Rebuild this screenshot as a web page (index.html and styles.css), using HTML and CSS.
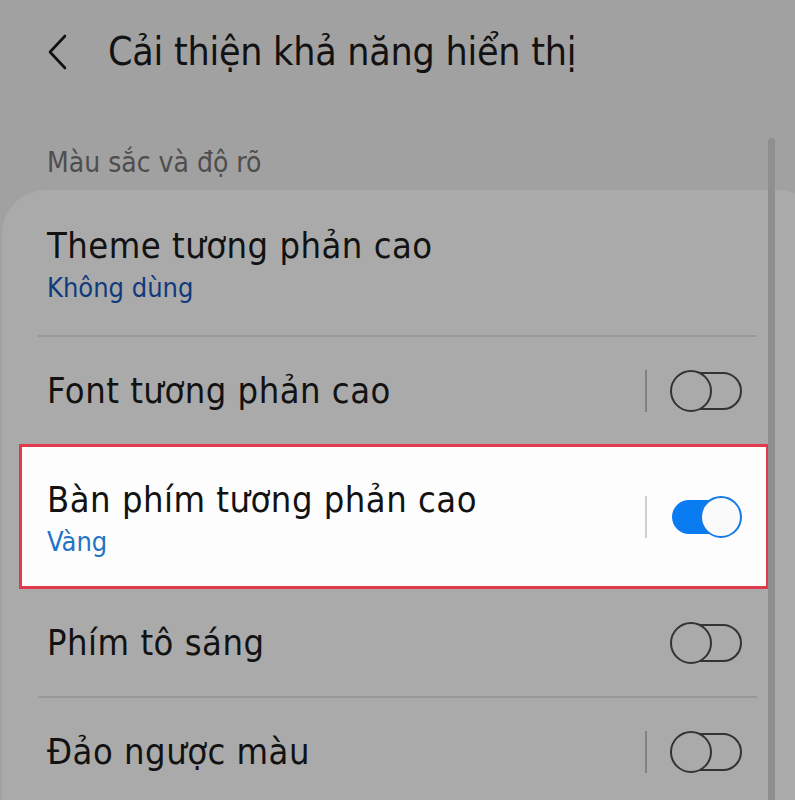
FILE: index.html
```html
<!DOCTYPE html>
<html lang="vi">
<head>
<meta charset="utf-8">
<link rel="stylesheet" href="styles.css">
</head>
<body>
<div class="screen">
  <header class="topbar">
    <svg class="back" width="24" height="36" viewBox="0 0 24 36"><path d="M19 2 L4 18 L19 34" fill="none" stroke="#111" stroke-width="2.6" stroke-linecap="round" stroke-linejoin="round"/></svg>
    <h1 class="title">Cải thiện khả năng hiển thị</h1>
  </header>
  <div class="section-label">Màu sắc và độ rõ</div>
  <div class="card">
    <div class="row row-tall">
      <div class="texts">
        <div class="item-title">Theme tương phản cao</div>
        <div class="item-sub sub-dark">Không dùng</div>
      </div>
    </div>
    <div class="divider"></div>
    <div class="row">
      <div class="texts">
        <div class="item-title">Font tương phản cao</div>
      </div>
      <div class="vsep"></div>
      <div class="toggle off"><span class="knob"></span></div>
    </div>
    <div class="row row-tall highlight">
      <div class="texts">
        <div class="item-title">Bàn phím tương phản cao</div>
        <div class="item-sub sub-blue">Vàng</div>
      </div>
      <div class="vsep light"></div>
      <div class="toggle on"><span class="knob"></span></div>
    </div>
    <div class="row">
      <div class="texts">
        <div class="item-title">Phím tô sáng</div>
      </div>
      <div class="toggle off"><span class="knob"></span></div>
    </div>
    <div class="divider"></div>
    <div class="row">
      <div class="texts">
        <div class="item-title">Đảo ngược màu</div>
      </div>
      <div class="vsep"></div>
      <div class="toggle off"><span class="knob"></span></div>
    </div>
  </div>
  <div class="scrollbar"></div>
</div>
</body>
</html>
```
FILE: styles.css
```css
html, body {
  margin: 0;
  padding: 0;
}
body {
  width: 795px;
  height: 800px;
  overflow: hidden;
  background: #a1a1a1;
  font-family: "DejaVu Sans", "Noto Sans", sans-serif;
  font-stretch: condensed;
  color: #121212;
}
.screen {
  position: relative;
  width: 795px;
  height: 800px;
  overflow: hidden;
}
.topbar {
  display: flex;
  align-items: center;
  height: 102px;
  padding-left: 46px;
}
.back {
  display: block;
  margin-top: 2px;
}
.title {
  margin: 0 0 0 38px;
  font-weight: normal;
  font-size: 39px;
  letter-spacing: -0.25px;
  line-height: 1;
}
.section-label {
  height: 88px;
  box-sizing: border-box;
  padding: 47px 0 0 47px;
  font-size: 28px;
  color: #4e4e4e;
  line-height: 1;
}
.card {
  margin-left: 2px;
  width: 820px;
  background: #aaaaaa;
  border-radius: 44px 44px 0 0;
}
.row {
  display: flex;
  align-items: center;
  height: 107px;
  padding: 0 53px 0 45px;
  width: 793px;
  box-sizing: border-box;
}
.row-tall {
  height: 145px;
}
.texts {
  flex: 1;
}
.row-tall .texts {
  padding-top: 6px;
}
.item-title {
  font-size: 36px;
  letter-spacing: 0.5px;
  line-height: 40px;
}
.item-sub {
  font-size: 27px;
  line-height: 34px;
  margin-top: 5px;
}
.sub-dark { color: #10397e; }
.sub-blue { color: #1f74c4; }
.divider {
  height: 2px;
  background: #989898;
  margin-left: 36px;
  width: 719px;
}
.highlight {
  margin-left: 17px;
  width: 750px;
  padding-left: 25px;
  padding-right: 24px;
  background: #fdfdfd;
  border: 3px solid #e2394c;
  height: 145px;
}
.vsep {
  width: 2px;
  height: 42px;
  background: #808080;
  margin-right: 23px;
}
.vsep.light {
  background: #cfcfcf;
}
.toggle {
  position: relative;
  width: 72px;
  height: 42px;
  box-sizing: border-box;
}
.toggle.off::before {
  content: "";
  position: absolute;
  left: 1px;
  right: 0;
  top: 2px;
  bottom: 2px;
  border: 2.5px solid #333;
  border-radius: 20px;
}
.toggle.off .knob {
  position: absolute;
  left: 0;
  top: 0;
  width: 42px;
  height: 42px;
  box-sizing: border-box;
  border: 2.5px solid #333;
  border-radius: 50%;
  background: #aaaaaa;
}
.toggle.on::before {
  content: "";
  position: absolute;
  left: 2px;
  right: 4px;
  top: 4px;
  bottom: 4px;
  background: #0a7cf2;
  border-radius: 17px;
}
.toggle.on .knob {
  position: absolute;
  right: 0;
  top: 0;
  width: 42px;
  height: 42px;
  box-sizing: border-box;
  border: 2px solid #1779e6;
  border-radius: 50%;
  background: #fafafa;
}
.scrollbar {
  position: absolute;
  left: 768px;
  top: 138px;
  width: 7px;
  height: 680px;
  border-radius: 4px;
  background: #8f8f8f;
}
```
